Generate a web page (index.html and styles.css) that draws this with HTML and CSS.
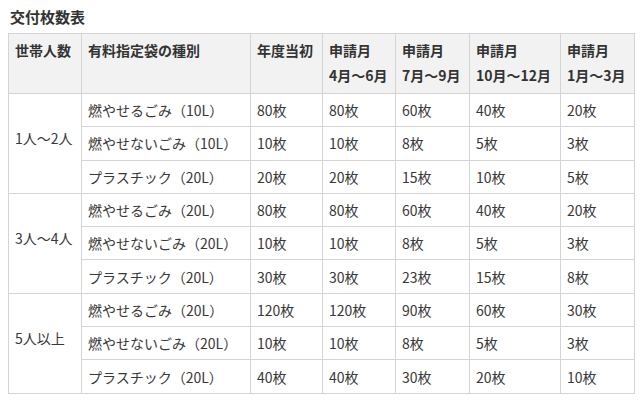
FILE: index.html
```html
<!DOCTYPE html>
<html lang="ja">
<head>
<meta charset="utf-8">
<link rel="stylesheet" href="styles.css">
</head>
<body>
<h2 class="title">交付枚数表</h2>
<table class="tbl">
<colgroup>
<col class="c1"><col class="c2"><col class="c3"><col class="c4"><col class="c5"><col class="c6"><col class="c7">
</colgroup>
<thead>
<tr>
<th>世帯人数</th><th>有料指定袋の種別</th><th>年度当初</th><th>申請月<br>4月～6月</th><th>申請月<br>7月～9月</th><th>申請月<br>10月～12月</th><th>申請月<br>1月～3月</th>
</tr>
</thead>
<tbody>
<tr><td rowspan="3" class="grp">1人～2人</td><td>燃やせるごみ（10L）</td><td>80枚</td><td>80枚</td><td>60枚</td><td>40枚</td><td>20枚</td></tr>
<tr><td>燃やせないごみ（10L）</td><td>10枚</td><td>10枚</td><td>8枚</td><td>5枚</td><td>3枚</td></tr>
<tr><td>プラスチック（20L）</td><td>20枚</td><td>20枚</td><td>15枚</td><td>10枚</td><td>5枚</td></tr>
<tr><td rowspan="3" class="grp">3人～4人</td><td>燃やせるごみ（20L）</td><td>80枚</td><td>80枚</td><td>60枚</td><td>40枚</td><td>20枚</td></tr>
<tr><td>燃やせないごみ（20L）</td><td>10枚</td><td>10枚</td><td>8枚</td><td>5枚</td><td>3枚</td></tr>
<tr><td>プラスチック（20L）</td><td>30枚</td><td>30枚</td><td>23枚</td><td>15枚</td><td>8枚</td></tr>
<tr><td rowspan="3" class="grp">5人以上</td><td>燃やせるごみ（20L）</td><td>120枚</td><td>120枚</td><td>90枚</td><td>60枚</td><td>30枚</td></tr>
<tr><td>燃やせないごみ（20L）</td><td>10枚</td><td>10枚</td><td>8枚</td><td>5枚</td><td>3枚</td></tr>
<tr><td>プラスチック（20L）</td><td>40枚</td><td>40枚</td><td>30枚</td><td>20枚</td><td>10枚</td></tr>
</tbody>
</table>
</body>
</html>
```
FILE: styles.css
```css
html, body {
  margin: 0;
  padding: 0;
  background: #ffffff;
}
body {
  font-family: "Noto Sans CJK JP", "Noto Sans", sans-serif;
  color: #383838;
}
.title {
  margin: 0;
  padding: 7px 0 0 10px;
  height: 26px;
  font-size: 15px;
  line-height: 20px;
  font-weight: 700;
  color: #333333;
}
.tbl {
  margin-left: 8px;
  border-collapse: collapse;
  table-layout: fixed;
  width: 626px;
  font-size: 14px;
}
.c1 { width: 73px; }
.c2 { width: 169px; }
.c3 { width: 72px; }
.c4 { width: 73px; }
.c5 { width: 74px; }
.c6 { width: 91px; }
.c7 { width: 74px; }
.tbl th, .tbl td {
  border: 1px solid #d4d4d4;
  padding: 4px 6px;
  line-height: 24px;
  text-align: left;
  white-space: nowrap;
}
.tbl th {
  background: #f2f2f2;
  font-weight: 700;
  color: #333333;
  vertical-align: top;
  height: 51px;
  padding-top: 4px;
  line-height: 25px;
}
.tbl td {
  height: 24.3px;
  font-weight: 400;
}
.tbl td.grp {
  background: #ffffff;
  padding-bottom: 14px;
  vertical-align: middle;
}
```
